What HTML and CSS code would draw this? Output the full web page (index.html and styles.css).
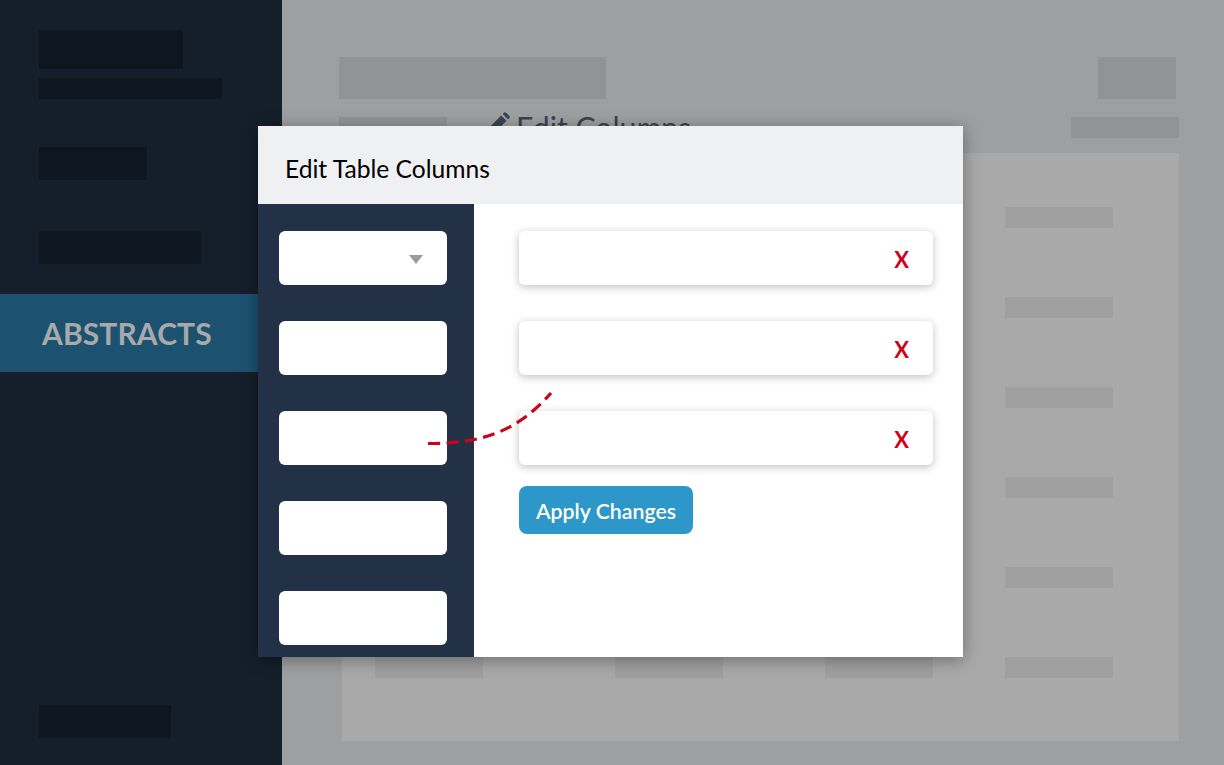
FILE: index.html
```html
<!DOCTYPE html>
<html lang="en">
<head>
    <meta charset="UTF-8">
    <meta name="viewport" content="width=device-width, initial-scale=1.0">
    <title>Edit Table Columns</title>
    <link rel="stylesheet" href="styles.css">
</head>
<body>
    <div class="page">
        <aside class="sidebar">
            <div class="side-brand">
                <div class="ph ph-brand-top"></div>
                <div class="ph ph-brand-sub"></div>
            </div>
            <div class="ph ph-nav-one"></div>
            <div class="ph ph-nav-two"></div>
            <div class="nav-active">ABSTRACTS</div>
            <div class="ph ph-nav-foot"></div>
        </aside>
        <main class="main">
            <div class="main-top">
                <div class="blk blk-title"></div>
                <div class="blk blk-action"></div>
            </div>
            <div class="main-sub">
                <div class="blk blk-sub"></div>
                <div class="edit-columns">
                    <svg class="pencil" viewBox="0 0 24 24" width="22" height="22">
                        <path d="M0 24l1.400-7.200L14.400 3.800l5.800 5.800L7.200 22.600zM16 2.200l1.500-1.500q1.100-1 2.200 0l3.600 3.600q1 1.100 0 2.200L21.800 8z" fill="#3a4350"/>
                    </svg>
                    <span>Edit Columns</span>
                </div>
                <div class="blk blk-sub"></div>
            </div>
            <div class="table">
                <div class="blk cell"></div><div class="blk cell"></div><div class="blk cell"></div><div class="blk cell"></div>
                <div class="blk cell"></div><div class="blk cell"></div><div class="blk cell"></div><div class="blk cell"></div>
                <div class="blk cell"></div><div class="blk cell"></div><div class="blk cell"></div><div class="blk cell"></div>
                <div class="blk cell"></div><div class="blk cell"></div><div class="blk cell"></div><div class="blk cell"></div>
                <div class="blk cell"></div><div class="blk cell"></div><div class="blk cell"></div><div class="blk cell"></div>
                <div class="blk cell"></div><div class="blk cell"></div><div class="blk cell"></div><div class="blk cell"></div>
            </div>
        </main>
    </div>

    <div class="modal">
        <div class="modal-header">Edit Table Columns</div>
        <div class="modal-body">
            <div class="picker">
                <div class="pick pick-select"><span class="caret"></span></div>
                <div class="pick"></div>
                <div class="pick"></div>
                <div class="pick"></div>
                <div class="pick"></div>
            </div>
            <div class="chosen">
                <div class="chosen-item"><span class="remove">X</span></div>
                <div class="chosen-item"><span class="remove">X</span></div>
                <div class="chosen-item"><span class="remove">X</span></div>
                <a href="#" class="apply">Apply Changes</a>
            </div>
        </div>
        <!-- drag path from the picker to the chosen list -->
        <svg class="drag-line" viewBox="0 0 705 531" width="705" height="531">
            <path d="M170 317.500C222 317.500 258 307 293 267" fill="none" stroke="#d0021b" stroke-width="3.200" stroke-dasharray="12 6.500"/>
        </svg>
    </div>
</body>
</html>
```

FILE: styles.css
```css
* {
    box-sizing: border-box;
}
html, body {
    margin: 0;
    height: 100%;
}
body {
    font-family: Lato, "Open Sans", Arial, sans-serif;
    overflow: hidden;
    background-color: #9e9fa1;
}
.page {
    display: flex;
    height: 765px;
}
.sidebar {
    width: 282px;
    flex-shrink: 0;
    display: flex;
    flex-direction: column;
    padding: 30px 0 27px;
    background-color: #141f2b;
}
.ph {
    margin-left: 39px;
    background-color: #0e171f;
}
.ph-brand-top {
    width: 144px;
    height: 39px;
}
.ph-brand-sub {
    width: 183px;
    height: 21px;
    margin-top: 9px;
}
.ph-nav-one {
    width: 108px;
    height: 33px;
    margin-top: 48px;
}
.ph-nav-two {
    width: 162px;
    height: 33px;
    margin-top: 51px;
}
.ph-nav-foot {
    width: 132px;
    height: 33px;
    margin-top: auto;
}
.nav-active {
    height: 78px;
    margin-top: 30px;
    padding-left: 42px;
    line-height: 78px;
    font-size: 30px;
    font-weight: 700;
    letter-spacing: 0.1px;
    color: #a8a9ab;
    background-color: #1c5270;
}
.main {
    flex: 1;
    padding: 57px 45px 0 57px;
}
.blk {
    background-color: #929395;
}
.main-top {
    display: flex;
    justify-content: space-between;
    padding-right: 3px;
}
.blk-title {
    width: 267px;
    height: 42px;
}
.blk-action {
    width: 78px;
    height: 42px;
}
.main-sub {
    display: flex;
    height: 21px;
    margin-top: 18px;
}
.blk-sub {
    width: 108px;
    height: 21px;
}
.edit-columns {
    display: flex;
    flex: 1;
    align-items: flex-start;
    gap: 6px;
    margin-left: 41px;
    font-size: 30.200px;
    line-height: 21px;
    color: #3a4350;
}
.pencil {
    flex-shrink: 0;
    margin-top: -5px;
}
.table {
    display: grid;
    grid-template-columns: 240px 210px 180px 108px;
    grid-auto-rows: 21px;
    row-gap: 69px;
    height: 588px;
    margin: 15px 0 0 3px;
    padding: 54px 0 0 33px;
    background-color: #a9a9a9;
}
.cell {
    width: 108px;
    background-color: #a0a0a0;
}

.modal {
    position: absolute;
    left: 258px;
    top: 126px;
    width: 705px;
    height: 531px;
    display: flex;
    flex-direction: column;
    background-color: #fff;
    box-shadow: 0 3px 16px rgba(0, 0, 0, 0.35);
}
.modal-header {
    height: 78px;
    padding-left: 27px;
    line-height: 86px;
    font-size: 24.600px;
    color: #000;
    background-color: #eff0f2;
}
.modal-body {
    flex: 1;
    display: flex;
    min-height: 0;
}
.picker {
    width: 216px;
    display: flex;
    flex-direction: column;
    gap: 36px;
    padding: 27px 0 0 21px;
    background-color: #223145;
}
.pick {
    width: 168px;
    height: 54px;
    position: relative;
    border-radius: 6px;
    background-color: #fff;
}
.caret {
    position: absolute;
    right: 24px;
    top: 24px;
    border-left: 7.500px solid transparent;
    border-right: 7.500px solid transparent;
    border-top: 9px solid #9b9b9b;
}
.chosen {
    flex: 1;
    display: flex;
    flex-direction: column;
    align-items: flex-start;
    padding: 27px 30px 0 45px;
}
.chosen-item {
    width: 100%;
    height: 54px;
    display: flex;
    align-items: center;
    justify-content: flex-end;
    margin-bottom: 36px;
    padding-right: 24px;
    border-radius: 6px;
    background-color: #fff;
    box-shadow: 0 2px 8px rgba(0, 0, 0, 0.25);
}
.chosen-item:nth-child(3) {
    margin-bottom: 21px;
}
.remove {
    padding-top: 2px;
    font-size: 22px;
    font-weight: 700;
    color: #d0021b;
}
.apply {
    width: 174px;
    height: 48px;
    line-height: 50px;
    text-align: center;
    text-decoration: none;
    font-size: 21.300px;
    font-weight: 600;
    color: #fff;
    border-radius: 8px;
    background-color: #2e97c9;
}
.drag-line {
    position: absolute;
    left: 0;
    top: 0;
    pointer-events: none;
}
```
